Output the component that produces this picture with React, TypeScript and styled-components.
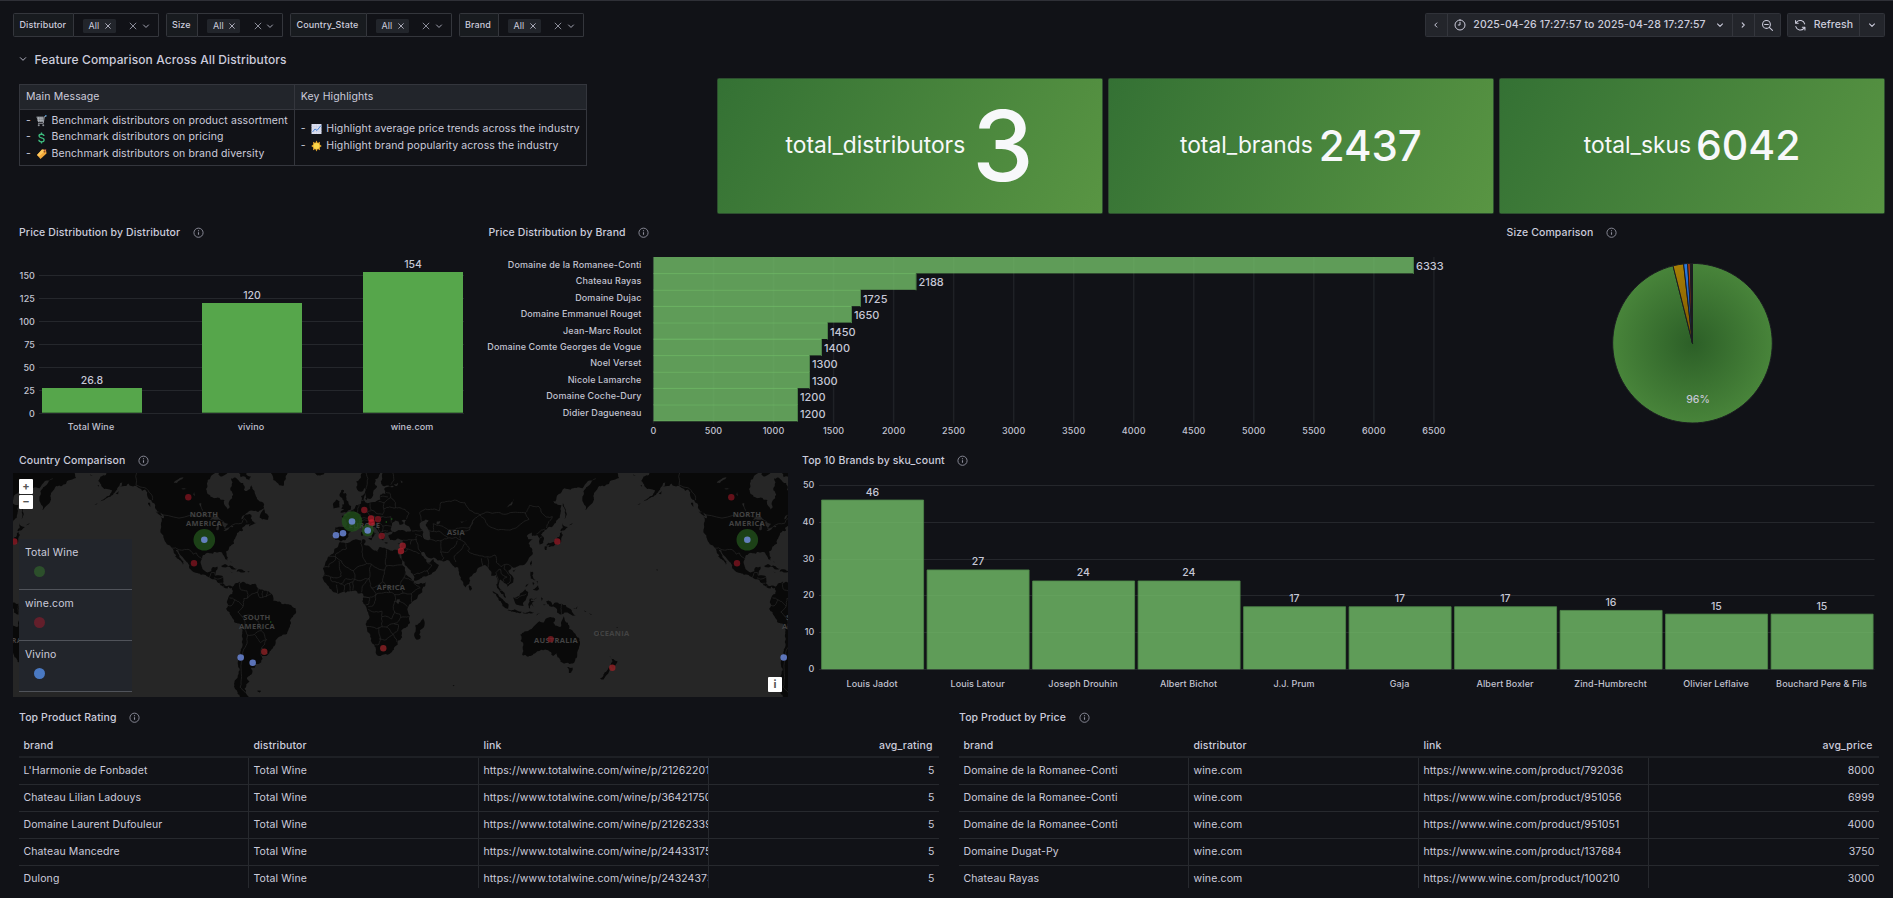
import React from 'react';
import styled, { createGlobalStyle } from 'styled-components';

const FONT = 'Inter, "Liberation Sans", sans-serif';

const Global = createGlobalStyle`
  * { box-sizing: border-box; }
  body {
    margin: 0;
    background: #111217;
    color: #ccccdc;
    font-family: ${FONT};
    font-size: 10.5px;
    letter-spacing: 0.01071em;
    overflow: hidden;
  }
  svg { display: block; flex: none; }
`;

/* ---------- page frame ---------- */

const Page = styled.div`
  height: 898px;
  border-top: 1px solid #2f3037;
  overflow: hidden;
`;

const Toolbar = styled.div`
  display: flex;
  align-items: center;
  height: 24px;
  margin: 12px 8px 0 13px;
`;

const Filters = styled.div`
  display: flex;
  flex: 1;
  gap: 7px;
`;

const FilterBox = styled.div`
  display: flex;
  height: 24px;
`;

const FilterLabel = styled.div<{ $w: number }>`
  display: flex;
  align-items: center;
  width: ${(p) => p.$w}px;
  padding: 0 0 1px 5.5px;
  font-size: 9px;
  font-weight: 500;
  background: #181b1f;
  border: 1px solid #34363c;
  border-radius: 1.5px 0 0 1.5px;
  white-space: nowrap;
`;

const FilterSelect = styled.div`
  display: flex;
  align-items: center;
  width: 85px;
  padding: 1px 7px 0 9px;
  border: 1px solid #34363c;
  border-left: none;
  border-radius: 0 1.5px 1.5px 0;
  color: #a4a5b3;
`;

const Chip = styled.span`
  display: flex;
  align-items: center;
  gap: 4.5px;
  height: 14px;
  width: 33px;
  padding-left: 6px;
  margin-right: auto;
  background: #22252b;
  border-radius: 1.5px;
  color: #ccccdc;
  font-size: 9px;
`;

const SelectIcons = styled.span`
  display: flex;
  align-items: center;
  gap: 2.5px;
`;

const ButtonGroup = styled.div`
  display: flex;
  height: 24px;
  margin-left: 6px;
  border: 1px solid #303239;
  border-radius: 1.5px;
  background: #23252b;
`;

const ToolButton = styled.button<{ $w: number }>`
  display: flex;
  align-items: center;
  justify-content: center;
  width: ${(p) => p.$w}px;
  padding: 0;
  border: 0;
  border-left: 1px solid #34363d;
  background: none;
  color: #ccccdc;
  font: 500 10.5px ${FONT};
  letter-spacing: 0.01071em;
  white-space: nowrap;
  &:first-child { border-left: 0; }
`;

const RangeText = styled.span`
  margin: 0 9px 1px 7px;
`;

const RefreshText = styled.span`
  margin: 0 0 1px 7.5px;
`;

const SectionTitle = styled.h1`
  display: flex;
  align-items: center;
  gap: 8px;
  height: 24px;
  margin: 10px 0 6.5px 18.5px;
  font-size: 12px;
  font-weight: 500;
`;

const Grid = styled.main`
  display: grid;
  grid-template-columns: repeat(24, minmax(0, 1fr));
  grid-auto-rows: 22.5px;
  gap: 6px;
  margin: 0 8px 0 13px;
`;

const Cell = styled.section<{ $cols: number; $rows: number }>`
  grid-column: span ${(p) => p.$cols};
  grid-row: span ${(p) => p.$rows};
  display: flex;
  flex-direction: column;
  min-width: 0;
`;

const PanelHeader = styled.h2<{ $inset: number }>`
  display: flex;
  align-items: center;
  gap: 12.5px;
  flex: none;
  height: 25px;
  margin: 0;
  padding-left: ${(p) => p.$inset}px;
  font-size: 10.5px;
  font-weight: 500;
`;

/* ---------- message table ---------- */

const MessageTable = styled.table`
  width: 567px;
  margin: 6.5px 0 0 6px;
  border-collapse: collapse;
  line-height: 16.5px;
  border: 1px solid #303239;
`;

const MessageHead = styled.th`
  height: 25px;
  padding: 0 6px 0;
  text-align: left;
  font-weight: 400;
  background: #22252b;
  border: 1px solid #34363d;
`;

const MessageCell = styled.td`
  height: 56px;
  padding: 0 6px;
  border: 1px solid #34363d;
`;

const MessageLine = styled.div`
  display: flex;
  align-items: center;
  white-space: nowrap;
  svg { margin: 0 4.5px 0 5px; }
`;

/* ---------- stat tiles ---------- */

const StatTile = styled.div`
  display: flex;
  flex: 1;
  align-items: center;
  justify-content: center;
  margin-left: -0.5px;
  color: #f7f8fa;
  border: 1px solid #2d4f2f;
  background: linear-gradient(120deg, #347134, #599543);
  border-radius: 1.5px;
  font-weight: 500;
  letter-spacing: 0;
  line-height: 1;
`;

const StatName = styled.span`
  font-size: 22.8px;
  font-weight: 400;
`;

const StatValue = styled.span<{ $size: number; $gap: number }>`
  margin-left: ${(p) => p.$gap}px;
  font-size: ${(p) => p.$size}px;
`;

/* ---------- charts ---------- */

const Chart = styled.svg`
  overflow: visible;
  margin-top: -1px;
`;

const AxisText = styled.text`
  font: 500 9px ${FONT};
  fill: #c2c3d1;
`;

const ValueText = styled.text<{ $size?: number }>`
  font: 500 ${(p) => p.$size ?? 10.5}px ${FONT};
  fill: #c6c7d6;
  letter-spacing: 0;
`;

/* ---------- map ---------- */

const MapFrame = styled.div`
  position: relative;
  width: 775px;
  height: 224px;
  overflow: hidden;
  background: #262626;
`;

const ZoomControls = styled.div`
  position: absolute;
  left: 6px;
  top: 6px;
  display: flex;
  flex-direction: column;
  gap: 1px;
`;

const MapButton = styled.button`
  display: flex;
  align-items: center;
  justify-content: center;
  width: 14px;
  height: 14.5px;
  padding: 0 0 1px;
  border: 0;
  border-radius: 1px;
  background: #ffffff;
  color: #555555;
  font: 700 11px ${FONT};
`;

const Attribution = styled(MapButton)`
  position: absolute;
  right: 6px;
  bottom: 5.5px;
`;

const Legend = styled.div`
  position: absolute;
  left: 6px;
  top: 66px;
  width: 113px;
  background: #22252b;
`;

const LegendItem = styled.div`
  height: 51px;
  padding: 7px 6px 0;
  border-bottom: 1px solid #50535a;
`;

const LegendDot = styled.div<{ $c: string }>`
  width: 11px;
  height: 11px;
  margin: 6.5px 0 0 9px;
  border-radius: 50%;
  background: ${(p) => p.$c};
`;

const MapLabel = styled.text`
  font: 700 7.5px "Open Sans", sans-serif;
  letter-spacing: 0.3px;
  fill: #434343;
  text-anchor: middle;
`;

/* ---------- data tables ---------- */

const DataTable = styled.div<{ $inset: number }>`
  width: 920px;
  height: 158px;
  margin: 0.5px 0 0 ${(p) => p.$inset}px;
  overflow: hidden;
`;

const Row = styled.div<{ $head?: boolean }>`
  display: grid;
  grid-template-columns: repeat(4, 230px);
  height: ${(p) => (p.$head ? 28 : 27)}px;
  border-bottom: ${(p) => (p.$head ? '2px solid #1e2025' : '1px solid #27292e')};
  font-weight: ${(p) => (p.$head ? 500 : 400)};
`;

const DataCell = styled.div<{ $right?: boolean; $head?: boolean }>`
  overflow: hidden;
  padding: 0 ${(p) => (p.$right && p.$head ? 6.5 : p.$right ? 4.5 : 0)}px 0 4.5px;
  line-height: ${(p) => (p.$head ? 31 : 25)}px;
  text-align: ${(p) => (p.$right ? 'right' : 'left')};
  border-right: ${(p) => (p.$head || p.$right ? '0' : '1px solid #27292e')};
  white-space: nowrap;
`;

/* ---------- icons ---------- */

type IconProps = { size?: number; d: string; w?: number };
const Icon = ({ size = 10, d, w = 2 }: IconProps) => (
  <svg width={size} height={size} viewBox="0 0 24 24" fill="none" stroke="currentColor" strokeWidth={w} strokeLinecap="round" strokeLinejoin="round">
    <path d={d} />
  </svg>
);
const CHEVRON_DOWN = 'M6 9.5l6 6 6-6';
const CROSS = 'M5 5l14 14M19 5L5 19';
const ZOOM_OUT = 'M10.5 3a7.5 7.5 0 1 0 0 15a7.5 7.5 0 1 0 0-15zM16 16l6 6M7 10.5h7';
const CLOCK = 'M12 2a10 10 0 1 0 0 20a10 10 0 1 0 0-20zM12 6.5V12H8.5';
const SYNC = 'M20.5 9.5A9 9 0 0 0 5 6L3 8M3 3v5h5M3.500 14.500A9 9 0 0 0 19 18l2-2M21 21v-5h-5';

const Info = () => (
  <svg width="11" height="11" viewBox="0 0 24 24" fill="none" stroke="#8e8f9c" strokeWidth="2">
    <circle cx="12" cy="12.500" r="10" />
    <path d="M12 11.500v5.500M12 7v2.200" strokeWidth="2.400" />
  </svg>
);

const CartGlyph = () => (
  <svg width="11" height="12" viewBox="0 0 22 24" fill="none">
    <path d="M1 4h14l-1 10H4z" fill="#6d7177" />
    <path d="M1 4h14M2 7.500h13M3 11h12M5 4v10M8.500 4v10M12 4v10" stroke="#b5bac0" strokeWidth="1.300" />
    <path d="M20.500 2l-4 1.500-2 13H4" stroke="#a9adb3" strokeWidth="1.800" />
    <path d="M18 1.500l3 .3" stroke="#4aa3e8" strokeWidth="2.500" />
    <circle cx="5.500" cy="20.500" r="2" fill="#8d9197" />
    <circle cx="14.500" cy="20.500" r="2" fill="#8d9197" />
  </svg>
);
const DollarGlyph = () => (
  <svg width="11" height="12" viewBox="0 0 22 24" fill="none" stroke="#3dbb7e" strokeWidth="2.600">
    <path d="M16 8c0-2.200-2-3.500-5-3.500S6 6 6 8s1.500 3 5 3.700 5.200 2 5.200 4.200-2.200 3.700-5.200 3.700-5.300-1.600-5.300-4" />
    <path d="M11 1v4M11 19v4" />
  </svg>
);
const TagGlyph = () => (
  <svg width="11" height="12" viewBox="0 0 22 24">
    <path d="M12 3l8 1 1 7-12 11-7-8z" fill="#f3a93a" />
    <path d="M12 3l8 1-14 13-4-3z" fill="#ffc75c" />
    <circle cx="17" cy="7" r="1.800" fill="#6e3a17" />
    <path d="M17 7l3-5" stroke="#d8484e" strokeWidth="1.500" />
  </svg>
);
const TrendGlyph = () => (
  <svg width="11" height="12" viewBox="0 0 22 24" fill="none">
    <path d="M1 2h20v20H1z" fill="#dcdff0" />
    <path d="M1 7h20M1 12h20M1 17h20M6 2v20M11 2v20M16 2v20" stroke="#c8cce2" strokeWidth="1" />
    <path d="M3 18l5-6 4 3 8-10" stroke="#4c86d8" strokeWidth="2" />
  </svg>
);
const SunGlyph = () => (
  <svg width="11" height="12" viewBox="0 0 22 24">
    <path d="M11 1l2.500 5L18 3.500 17.500 9l4 3-4 3 .5 5.500-4.500-2.500L11 23l-2.500-5L4 20.500 4.500 15l-4-3 4-3L4 3.500 8.500 6z" fill="#e9a92c" />
    <circle cx="11" cy="12" r="6" fill="#fbd54a" />
  </svg>
);

/* ---------- price by distributor ---------- */

const DistributorChart = () => {
  const zero = 169.5;
  const bars = [
    { name: 'Total Wine', v: '26.8', x: 29, top: 144 },
    { name: 'vivino', v: '120', x: 189, top: 59 },
    { name: 'wine.com', v: '154', x: 350, top: 28 },
  ];
  return (
    <Chart width="463" height="198">
      {[0, 25, 50, 75, 100, 125, 150].map((t) => {
        const y = Math.round(zero - t * 0.92) - 0.5;
        return (
          <g key={t}>
            <line x1="26" x2="451" y1={y} y2={y} stroke="#25272c" />
            <AxisText x="22" y={y + 3} textAnchor="end">{t}</AxisText>
          </g>
        );
      })}
      {bars.map((b) => (
        <g key={b.name}>
          <rect x={b.x} y={b.top} width="100" height={169 - b.top} fill="#56a64b" />
          <rect x={b.x} y="168" width="100" height="1" fill="#3f7a39" />
          <ValueText x={b.x + 50} y={b.top - 4.5} textAnchor="middle">{b.v}</ValueText>
          <AxisText x={b.x + 49} y="186" textAnchor="middle">{b.name}</AxisText>
        </g>
      ))}
    </Chart>
  );
};

/* ---------- price by brand ---------- */

const BRAND_PRICES: [string, number][] = [
  ['Domaine de la Romanee-Conti', 6333],
  ['Chateau Rayas', 2188],
  ['Domaine Dujac', 1725],
  ['Domaine Emmanuel Rouget', 1650],
  ['Jean-Marc Roulot', 1450],
  ['Domaine Comte Georges de Vogue', 1400],
  ['Noel Verset', 1300],
  ['Nicole Lamarche', 1300],
  ['Domaine Coche-Dury', 1200],
  ['Didier Dagueneau', 1200],
];

const BrandChart = () => {
  const x0 = 170.5;
  const ticks = Array.from({ length: 14 }, (_, i) => i * 500);
  return (
    <Chart width="1005" height="198">
      {ticks.map((t) => (
        <g key={t}>
          <line x1={x0 + t * 0.12006} x2={x0 + t * 0.12006} y1="13" y2="179.500" stroke="#1f2126" strokeWidth="1.500" />
          <AxisText x={x0 + t * 0.12006} y="189.800" textAnchor="middle">{t}</AxisText>
        </g>
      ))}
      {BRAND_PRICES.map(([name, v], i) => {
        const y = 13 + i * 16.4;
        const w = v * 0.12;
        return (
          <g key={name}>
            <rect x={x0} y={y} width={w} height="16.400" fill="#73bf69" fillOpacity="0.800" />
            {i > 0 && <line x1={x0} x2={x0 + w} y1={y + 0.2} y2={y + 0.2} stroke="#73bf69" strokeOpacity="0.800" />}
            <line x1={x0 + w} x2={x0 + w} y1={y} y2={y + 16.9} stroke="#4b7f47" strokeWidth="1" />
            <AxisText x="158.500" y={y + 11} textAnchor="end">{name}</AxisText>
            <ValueText $size={11} x={x0 + w + 2.5} y={y + 13} >{v}</ValueText>
          </g>
        );
      })}
      <line x1={x0} x2={x0 + 144} y1="177" y2="177" stroke="#73bf69" strokeOpacity="0.500" />
    </Chart>
  );
};

/* ---------- size pie ---------- */

const SizePie = () => {
  const cx = 192.5;
  const cy = 99.2;
  const r = 79.8;
  const pt = (deg: number) => {
    const a = (deg * Math.PI) / 180;
    return `${(cx + r * Math.sin(a)).toFixed(2)} ${(cy - r * Math.cos(a)).toFixed(2)}`;
  };
  const slice = (a: number, b: number) => `M${cx} ${cy}L${pt(a)}A${r} ${r} 0 ${b - a > 180 ? 1 : 0} 1 ${pt(b)}Z`;
  const slices: [number, number, string][] = [
    [0, 345.9, 'g'],
    [345.9, 353.6, 'y'],
    [353.6, 356.5, 'b'],
    [356.5, 358.4, 'o'],
    [358.4, 359.2, 'r'],
    [359.2, 360, 'p'],
  ];
  const tones: Record<string, [string, string]> = {
    g: ['#2c5f27', '#48843a'],
    y: ['#7a5600', '#a87e04'],
    b: ['#16458f', '#2a7be8'],
    o: ['#702a08', '#b8420e'],
    r: ['#451318', '#6e1f26'],
    p: ['#24182a', '#33263a'],
  };
  return (
    <Chart width="385" height="198">
      <defs>
        {Object.entries(tones).map(([k, [a, b]]) => (
          <radialGradient key={k} id={`tone-${k}`} gradientUnits="userSpaceOnUse" cx={cx} cy={cy} r={r}>
            <stop offset="0" stopColor={a} />
            <stop offset="1" stopColor={b} />
          </radialGradient>
        ))}
      </defs>
      {slices.map(([a, b, k]) => (
        <path key={k} d={slice(a, b)} fill={`url(#tone-${k})`} stroke="#1a1c20" strokeWidth="1" />
      ))}
      <ValueText x="198" y="159" textAnchor="middle">96%</ValueText>
    </Chart>
  );
};

/* ---------- brand sku counts ---------- */

const SKU_COUNTS: [string, number][] = [
  ['Louis Jadot', 46],
  ['Louis Latour', 27],
  ['Joseph Drouhin', 24],
  ['Albert Bichot', 24],
  ['J.J. Prum', 17],
  ['Gaja', 17],
  ['Albert Boxler', 17],
  ['Zind-Humbrecht', 16],
  ['Olivier Leflaive', 15],
  ['Bouchard Pere & Fils', 15],
];

const SkuChart = () => (
  <Chart width="1089" height="226">
    {[0, 10, 20, 30, 40, 50].map((t) => {
      const y = Math.round(197 - t * 3.68) + 0.5;
      return (
        <g key={t}>
          <line x1="23" x2="1078.500" y1={y} y2={y} stroke="#25272c" />
          <AxisText x="18.500" y={y + 2.8} textAnchor="end">{t}</AxisText>
        </g>
      );
    })}
    {SKU_COUNTS.map(([name, v], i) => {
      const x = 25.6 + i * 105.5;
      const top = 197.3 - v * 3.68;
      return (
        <g key={name}>
          <rect x={x} y={top} width="102" height={197.3 - top} fill="#73bf69" fillOpacity="0.800" />
          <path d={`M${x} 197V${top}H${x + 102}V197`} fill="none" stroke="#4e8549" strokeWidth="0.800" />
          <ValueText x={x + 50.8} y={top - 4.5} textAnchor="middle">{v}</ValueText>
          <AxisText x={x + 50.5} y="215" textAnchor="middle">{name}</AxisText>
        </g>
      );
    })}
  </Chart>
);

/* ---------- world map ---------- */

const WORLD = 543;
const RADIUS = WORLD / (2 * Math.PI);
const project = (lon: number, lat: number): [number, number] => [
  335.7 + (lon * WORLD) / 360,
  126.9 - RADIUS * Math.asinh(Math.tan((lat * Math.PI) / 180)),
];

// Flat "lon lat lon lat ..." outlines.
const LAND = [
  // North and Central America
  '-166 70 -166 66.5 -168 65.6 -164.5 64.5 -161 64.5 -161 63.5 -164.5 63 -166 61.6 -164 60 -162 59 -158.5 58.8 -157 58.7 -158 57.5 -161 56 -164.5 54.6 -162 55 -158 56.3 -155 57.8 -153.5 59.3 -151.5 61 -150 61.2 -151.8 59.5 -149 60 -146 60.8 -144 60 -140 59.7 -137 58.3 -135 58.8 -133.5 56.5 -131 55 -130 54 -128 51.5 -125 50 -123 49.2 -122.5 47.5 -124.7 48.4 -124 46 -124.4 43 -124.2 40.3 -122.5 37.7 -120.6 34.6 -118.4 33.9 -117.1 32.5 -116 30.5 -114.3 28.5 -115 27.7 -112.2 25.5 -110 22.9 -109.5 23.3 -111 26 -112.8 29 -114.7 31.6 -113 31.2 -112 29 -109.4 26.5 -108 25 -105.7 22.5 -105.5 20.2 -104 19 -101.5 17.7 -98 16.2 -94.8 16.2 -92.3 14.6 -88 13.2 -85.8 11 -83.6 9 -82.8 8.1 -80.3 7.5 -79.6 8.8 -78 7.5 -77 8.5 -79.5 9.5 -81.5 9 -83.5 11 -83.2 14.5 -84 15.8 -88.5 15.8 -88.2 18 -87 21.4 -90.3 21.1 -91 18.7 -94.5 18.2 -96.2 19.5 -97.7 22.5 -97.3 26 -97 28 -94.5 29.5 -90 29.2 -89.3 30.3 -86 30.3 -84 30 -82.7 28 -81.8 26 -80.4 25.2 -80.1 27 -81.4 30.5 -79 33.3 -76 35 -76 37 -75 38.5 -74 40.5 -70 41.7 -70.8 43 -67 44.7 -64.8 45.6 -66 43.7 -63.5 44.6 -61 45.5 -64 46.2 -65 47.5 -64.5 49 -67 49.2 -71 47 -67 50 -60 50.2 -56 51.8 -56 53.3 -60 55 -61.8 57 -64.5 60.3 -67.5 58.3 -69.5 58.8 -70 61 -74 62.3 -78 62.4 -77.5 60 -78.5 58.6 -76.6 57 -79 54.8 -79 52 -80.2 51.3 -82.2 53 -82.3 55 -87 56 -92.5 57 -94.6 59 -94 61 -90.5 63.5 -87 64.5 -86 66 -82 70',
  '-86.5 63.7 -84 63 -80.5 64 -83 65 -86 65.5',
  '-78 65 -76 64.2 -73 64.3 -71.500 62.8 -66 61.9 -64.7 63 -68 63.8 -64 65 -62 67 -75 68',
  '-59 47.7 -57.5 50.5 -56 51.5 -55.5 49.8 -53 48.5 -53.5 46.8 -55.5 47',
  '-128 50.8 -125 50 -123.5 48.4 -126 49.3',
  '-133 54 -131.7 54 -131.5 52.3',
  '-154.5 57.5 -152.5 58.3 -152.8 57.2',
  '-166.5 60.3 -165.5 60.3 -166 59.8',
  '-168.5 53.2 -166.5 54 -167 53.4',
  '-171.5 63.6 -169 63.2 -171 63.3',
  // South America
  '-77.4 8.6 -75.5 10.6 -72 12.2 -71.6 10.8 -70 12 -68 10.6 -64 10.4 -62 10.6 -61 8.7 -58 6.8 -54 5.9 -51.5 4.3 -50 1.5 -50 -.5 -48 -.8 -44.5 -2.7 -40 -2.9 -37 -4.9 -35.2 -5.5 -34.8 -8 -37 -11.3 -39 -13.5 -39 -17.5 -41 -22 -44.5 -23.2 -48.5 -26 -48.7 -28.5 -51 -31 -53.5 -34 -56 -34.9 -58.3 -34 -57 -36.3 -58 -38.2 -62 -39 -62.3 -41 -65 -41 -63.8 -42.5 -65.3 -44.5 -67.5 -46.2 -65.8 -47.5 -69 -50.5 -68.3 -52.4 -65.3 -54.7 -68 -56 -72 -54 -75 -51 -75.5 -47 -73 -44 -73.5 -39 -73.2 -37 -71.5 -32 -70.2 -25 -70.3 -18.3 -76 -14.5 -79 -8 -81.3 -6 -80 -3 -80.8 -1.5 -80 .8 -77.2 4 -77.5 7',
  '-61 -51.5 -58 -51.5 -59 -52.2',
  // Caribbean
  '-84.5 21.9 -82 23.1 -77 21.8 -74.2 20.2 -77.5 19.9 -79 21.5',
  '-74.3 18.5 -73 19.9 -68.5 18.7 -71.5 17.8',
  '-78.3 18.4 -76.3 18.2 -77.5 17.8',
  '-67.2 18.4 -65.6 18.4 -66.5 18',
  '-78.3 25 -77.8 24.2 -78 24',
  // Greenland and Iceland
  '-52 70 -53 66 -51.500 64 -50 62 -46 60.3 -43.3 60 -42 62 -40 65 -33 68 -30 70',
  '-22.5 64 -20 63.4 -16 64.1 -14 65 -22 66',
  // Africa
  '-5.9 35.8 -2 35.1 3 36.8 10 37.3 11 36.8 10.2 34.2 15 32.4 19 30.3 20 32.7 23 32.7 29 30.9 32.3 31.2 32.5 29.8 35.5 24 37.3 21 37.3 18.8 39.5 15.3 43.2 12.5 43 11.5 45 10.5 51.2 11.9 50.8 9.3 48 4.5 43 -.5 39.5 -4.5 39.3 -8 40.7 -10.5 40.7 -15 36.5 -18.5 34.8 -20 35.5 -24 32.7 -26 32.5 -28.5 30 -31.3 27 -33.7 22 -34.2 20 -34.8 18.4 -34 18 -32 15.2 -27 14.4 -22.5 12 -18 13.7 -12 13 -8.5 12 -6 9 -1 9.7 3.5 8.5 4.6 6 4.3 4.3 6.3 1 5.9 -2 4.8 -4 5.2 -7.6 4.4 -11.5 6.9 -13.2 8.9 -15 11 -16.8 13 -17.4 14.7 -16.2 18 -17 21 -15 25 -13 27.8 -9.8 30 -9.5 32 -6.8 34',
  '49.3 -12 50.4 -15.5 47.5 -24.8 45 -25.5 43.4 -22 44.4 -19.5 44.4 -16.2 47 -15.2',
  // Eurasia
  '-9 37 -9.4 38.8 -8.7 41 -9 43.2 -4 43.5 -1.8 43.4 -1.2 45 -2.2 47.1 -4.5 48 -4.5 48.6 -1.6 48.6 -1.5 49.6 .2 49.6 1.6 50.8 4 51.7 5 53.1 8.2 53.7 8.6 55 8.1 56.5 10.5 57.7 10.3 56.3 9.8 55 11 54.2 14 54 18.5 54.7 21 55.3 21 57 22.5 57.5 24.3 57.2 23.5 59 28 59.6 30 60 25 60.2 22.5 60 21.3 61.5 22 63.3 25 65 22 65.8 17.5 62.3 17.2 60.8 18.8 60 16.5 58.5 16 56.5 14.2 55.4 12.8 55.6 11.3 58.8 10.5 59.4 8 58.1 5.6 58.8 5 61.5 8 63.5 12 66 15 69 180 70 190 66.1 187 64.4 180 65 178 64.5 179.3 62.6 174 61.8 170 60 166 60 163.3 58 162.5 56 160 53 156.8 51 155.6 54 155.8 57 160 60.5 164 62.5 160 61.8 155 59.3 151 59.4 143 59.3 137 54.5 135.3 54.8 141 53 140.5 50 140 48 136 44.5 132 43.2 130 42 127.5 39.6 129.3 37 129 35.2 126.5 34.5 126.7 37.5 125 39.5 121.5 39 121.5 40.8 118 39 119 37.3 122.5 37.2 119.3 35 121.8 31.5 121.5 28.5 118.5 24.8 114 22.4 110.5 21 108 21.6 105.8 19 107 17 109.2 13 109 11.5 106.7 10.2 105 8.7 104.8 10.2 102.5 12 100.8 13.4 99.9 12 99.3 9.3 100.5 7.2 103.3 4.5 104.2 1.4 103.4 1.5 100.5 5 98.3 8 98.7 12 97.6 16.5 95.4 15.8 94.3 16 94 19 92 21.5 90.5 22.5 87 21.3 85 19.6 82.3 16.6 80.2 15 79.9 10.4 77.6 8.1 76 10.5 73.5 16 72.8 20 72.5 21 70.5 20.9 69 22.3 67.5 23.9 66.5 25.3 61.5 25.1 57.2 26.8 54 26.6 51.3 27.9 50 30.2 48 30 48.5 28.3 50.2 26.6 51.5 25.9 51.6 24.3 54 24.1 56.3 26.2 56.6 24.5 59.8 22.5 57.7 19 55 17 52 15.6 45 12.8 43.3 12.7 42.7 16.5 39 21 37 24.5 34.9 29.4 32.6 29.9 32.3 31.2 34.3 31.3 35.8 35 36 36.8 30.6 36.7 27.5 36.9 26.3 39.3 29 40.5 29.2 41.2 31.5 41.2 35 42 38 41 41.5 41.5 39 44 37 45.2 38.5 47 35 46.2 36.5 45.3 33.7 44.5 33 46 30.8 46.5 28.7 44.5 27.7 42.5 28.9 41.2 26 40.6 23 40.4 24 38 22.8 36.6 21.2 38 19.4 41.5 18.5 42.5 15 44.5 13.7 45.5 12.3 45.2 12.5 44 14.2 42.3 16 41.8 18.4 40 17 40.4 16.8 39 15.8 38 15.6 40 13.5 41.2 10.5 43 8.8 44.4 6 43.1 3.5 43.4 3 41.8 .2 40.6 -.1 38.7 -2 36.8 -5.4 36.1 -6.4 36.9',
  '-5.5 50 1.3 51.2 1.6 52.7 0 53.5 -1.5 55 -2 57.6 -4 57.6 -3.1 58.6 -5 58.6 -6 56.5 -3.3 54.8 -3 53.4 -4.5 53.2 -4.2 52.3 -5 51.7 -3 51.4',
  '-6 52.2 -6 54.5 -8 55.3 -10 54 -10 51.7',
  '12.500 38 15.5 38.2 15 36.7',
  '8.3 41 9.6 41 9.5 39.2 8.5 39',
  '8.7 42.5 9.5 42.8 9.3 41.5',
  '23.6 35.5 26.3 35.2 24.8 34.9',
  '32.4 35 34.3 35.5 33.2 34.6',
  '11 55.7 12.5 56 12 55',
  // Asia islands
  '130.9 34 132.5 35.4 136 35.8 137 37.3 139.5 38.5 140 40.5 141.3 41.4 142 39.5 140.9 37.5 140.8 35.7 139 34.8 137 34.6 135.8 33.5 133 34.3',
  '140.3 41.5 141.5 45.3 145.3 43.5 143.3 42',
  '130 33.5 131.8 33.5 131.2 31.4 130.2 31.3',
  '132.3 33.3 134.5 34.2 134 33.3',
  '142 46 142 53.8 143.3 52 144.5 49 143 46.7',
  '146 44.3 148.5 45.5 147 44.4',
  '121.5 25.2 121 22 120.1 23.3',
  '108.7 19.2 110.8 20 109.5 18.2',
  '80 9.7 81.8 7.5 80.5 6 79.8 7.5',
  '120.5 18.3 122.2 18.3 121.7 16 124 13 120.7 14',
  '122 7 125.5 9.7 126.3 7 125 6',
  '122 11.7 123.200 11 122.5 9.5 122 10.5',
  '124.5 12.4 125.4 12.3 125 10.300',
  '117.2 8.4 119.5 11.2 118 9',
  '95.3 5.6 98 4.3 103.5 -1 106 -3 105.7 -5.8 102 -4 98.7 1.5',
  '105.3 -6.7 108.5 -6.7 114.5 -7.7 114.3 -8.7 108 -7.8',
  '115.2 -8.2 119 -8.2 122.800 -8.2 122 -8.8 117 -9',
  '123.7 -10.3 127 -8.4 125 -9.4',
  '109 1.5 111 1.7 114 4.5 117 7 119 5.2 117.7 1 116 -4 111 -3 110 -1',
  '119.5 -5.5 119 -3 120 .8 125 1.5 121 .4 120.7 -.8 123.3 -1 121.5 -2 122.7 -4.5 121 -2.8 120.3 -5.5',
  '127.500 1.8 128.7 1 128 -.7',
  '128 -3 130.8 -3.2 129.5 -3.5',
  '131 -.8 134 -1 135 -3.3 138 -1.7 141 -2.6 146 -5.5 148 -8 150.5 -10.5 147 -9.5 143 -8.3 142.5 -9.2 138 -8.3 138 -6 133 -4',
  '148.5 -5.6 152 -4.3 151 -6',
  '156 -7 157.500 -8 156.500 -7.600',
  '159.5 -8.5 161.5 -10 160 -9.500',
  '164 -20.2 167 -22.3 165.5 -21.6',
  '177.3 -17.6 178.6 -17.7 178 -18.2',
  '-155.9 20 -155 19.5 -155.7 19',
  // Oceania
  '113.7 -22.5 114 -26 115.8 -32 115 -34.2 118 -35 124 -33 129 -31.6 131.5 -31.5 135.5 -34.8 137.8 -33 138.5 -35.5 140.5 -38 144 -38.5 146.4 -39 150 -37.4 151.5 -33 153.3 -28.5 153 -25 150.7 -23 148.5 -20 146 -18.8 145.3 -15 143.6 -14 142.5 -10.8 141.6 -13 140.8 -17.4 139 -17.3 135.5 -15 136.8 -12.2 132.6 -11.5 130.5 -12.5 129.3 -14.9 126.5 -14 123 -17 122 -18.2 118.5 -20.3 115 -21.5',
  '144.7 -40.8 148.3 -40.9 147.5 -43.3 146 -43.5',
  '172.8 -34.5 175.5 -36.5 178.3 -37.7 176.9 -39.6 175.2 -41.6 173.8 -39.3 174.8 -38',
  '172.7 -40.6 174.2 -41.5 171 -44.5 169 -46.6 166.6 -46 170.5 -43',
  '69 -49 70.3 -49.3 69.300 -49.6',
];

const LAKES = [
  '47 45 51 47 53 46.5 51 44.5 53 42 53.8 40 53.8 37 50 37.4 49 39.5 49.5 41 47.5 43',
  '-92 46.7 -88 48.8 -84.7 46.6 -88 46.8',
  '-87.8 42 -87 45.5 -85 45.8 -86.300 42',
  '-84 45.8 -80 45 -82 43.2 -83.500 44',
  '-83 41.7 -79 42.8 -81 41.7',
  '-79.6 43.3 -76.3 44 -77 43.3',
  '-99 53.8 -97.7 53.8 -96.5 50.6 -97.6 51.6',
  '-116 61 -112 62.6 -109.500 62.8 -114 61',
  '-111 59.300 -107 59.300 -110 58.9',
  '-102.500 58 -101.800 56.600 -103 57',
  '104 51.5 108 53 109.7 55.7 107.500 53.7',
  '58.500 46 60.8 46.3 60 45 58.500 44.5',
  '74 46 79 46.8 75 45.300',
  '31.8 .3 34 .2 33 -2.7 31.8 -2',
  '30 60.500 32.8 61 32 60',
  '34.500 62 36 61.3 35 61',
];

const BORDERS = [
  '-123 49 -95 49 -88 48 -83 46 -82 42.5 -79 43.3 -75 45 -71 45.2 -69 47.3 -67.5 45.5',
  '-141 60.3 -141 70',
  '-141 60.3 -135.500 59.500 -130 56 -130 55',
  '-117 32.5 -114.7 32.6 -111 31.3 -106.5 31.8 -103 29 -101 29.7 -97.3 25.9',
  '-92.3 14.6 -91 17.800 -89 17.800 -88.5 16', '-89.300 14.400 -86 13.800 -83.2 15', '-85.700 11 -83.7 11', '-82.9 8.1 -82.7 9.6',
  '-79 1.4 -75.3 0 -70 -4.2 -69.500 1 -67 1.2 -67.500 6 -72 7.3 -72.500 11 -71.3 11.9',
  '-80.3 -3.4 -78 -4 -75.3 0', '-70 -4.2 -73.500 -8 -70.500 -11 -65.300 -10 -60 -14 -58 -20 -62.500 -22.3 -67 -22.8 -69 -19 -69.500 -12.500 -70.500 -11',
  '-70.3 -18.3 -69 -17.600', '-67 -22.8 -70 -32 -71.500 -40 -72 -50 -68.5 -52.3', '-58 -20 -54.500 -25.5 -58.500 -27.2 -62.500 -22.3', '-54.500 -25.5 -57.6 -30.2 -53.5 -33.7', '-57.6 -30.2 -58.3 -34',
  '-67 1.2 -64 4 -60.500 5 -59 1.500 -54.500 2.3 -51.500 4', '-57 6 -57 2', '-54 5.8 -54.500 2.3', '-60.500 5 -60 8',
  '-13 27.7 -8.700 27.5 -8.700 26 -13 23 -13 21.300 -17 21', '-8.700 27.5 -4.8 25 3 19 12 23.5 9.800 26.500 9 32 8 35 8.500 37', '-2 35 -1.5 32 -8.700 29 -8.700 27.5',
  '12 23.5 15 23 24 19.5 25 22 25 31.6', '25 22 37 22', '15 23 13.500 14 4 13.500 3 19', '-12 15 -5 15.500 -6.500 25', '-12 15 -16.500 16.200', '4 13.500 -2 14 -5.500 10.500 -11.500 12.400 -12 15',
  '-8 10 -7.500 4.500', '-5.500 10.500 -2.800 9.500 -3 5', '-2.800 9.500 .500 11 1 6', '2.700 12 2.700 6.400', '.500 11 2.700 12 4 13.500', '13.500 14 8.500 5', '24 19.5 22.500 12 27.500 5 18.500 4 15 8 13.500 14', '22.500 12 15 8',
  '27.500 5 30.500 3.500 29.500 -4.500 30.500 -8 28.500 -12.500 22 -11 22 -7.500 17 -8 13 -6', '9.5 2.200 16 2 18.500 4', '18 4 16 -4 13 -4.500', '9.500 2 14 1 13 -3 11 -3.500', '24 9 34 9.500 36.500 14.500 37.500 18', '34 9.500 36 4.5 41.500 4 41.500 -1.500', '36 4.500 30.500 3.500', '41.500 4 47.500 8 43 11',
  '36.500 14.500 42.500 12.500', '34 -1 37.500 -3 39 -4.6', '34 -1 30 -1', '30.500 -8 34 -9.500 34.500 -11.500 40.500 -10.700', '34.500 -11.500 33 -14 30 -15.6 25 -17.7 12 -17.3', '22 -11 22 -17.6', '20 -18 20 -28.3 17 -28.8', '20 -25 25 -25.500 29.500 -22.2 31.500 -25 32 -27', '25 -17.700 29.500 -22.2 32.500 -20 32.800 -16 30 -15.6',
  '-7 42 -7 37.2', '-8.800 42 -6.500 42', '-1.700 43.2 3 42.4', '2.5 51 6.200 49.500 8 49 7.500 47.5 7 44', '6.200 49.500 6 51.800 7 53.3', '8.500 54.900 9.800 54.900', '14.2 53.8 15 51 12.2 50.2 13.700 48.7 13 47.6 7.500 47.5', '15 51 18.8 49.5 22.500 49.1 23.500 51 23.500 54 19.8 54.4', '13.7 48.7 17 48.500 16 46.800 13.7 46.5 10.500 46.8 7 45.9', '17 48 22.2 48.2 20.500 46.2 16.500 46.5', '22.2 48.2 28 48.2 28.200 45.500', '20.500 46.2 22.500 44 28.500 43.800', '22.500 44 22.500 41.3 26 41.500', '19 45 20 42 21 40.800 22.9 41.3',
  '23.500 54 28 56 27.500 57.5', '23.500 51.6 31 52 34 52 40 49.8 38.3 47.2', '28 56 31 54 31 52', '21 56.200 26 56.2', '24.500 58 27.3 57.6', '28 60.5 30 62 30 66', '12 66 12.3 61 11.500 59',
  '48 46 47 50 51 51.500 60 50.700 61 54 70 55 77 54 80 51 87 49 83 47 80 43 74 43 70 42 66 42 61 44 56 45 56 41.3 53 42',
  '87 49 98 50 107 50 117 49.800 120 53 126 52.5 131 48 135 48.300 131 43', '87 49 91 45.5 97 42.6 106 42 112 43.6 116 46 119.5 47 117 49.800', '83 47 80 42 74 40 74 37 80 32 79 31 88 28 92 27.5 97 28.5 98 24 101 21.500 105 23 108 21.5',
  '56 41.3 60 41.500 66 38 61 36.5 54 37.3', '66 38 71 38.300 74 37', '61 36.5 61 30 66 30 70 33 72 36.500', '61 30 63 27 61.6 25.2', '71 24.300 70 28 75 32 77 35', '44 40 48.5 38.500', '45 39 45 36 46 33 48 30', '42 37 36.200 36.800', '41 34.5 42 37 45 37.2', '39 32 36 32.500 36 33', '39 32 47 29.3', '35 29.5 38 30.500 39 32', '52 24 55 22.500 52 19 45 17.3 43 16.500', '52 19 53 16.700', '42 41.500 47 41.500 48.5 41.8', '88 26.500 89 22', '92 27 92.500 21', '97.500 18 98.500 15 99 12', '100.500 20 101 17.500 105 15 102.500 13.500 103 12', '100.500 20 98 18', '104 22.800 103 20 107.500 15 107 12 105 10.500', '100.200 6.500 102 6.300', '109.800 1.500 112 1 115 3 117.700 4', '141 -2.6 141 -9.2', '127 41.5 130 42.4', '124.500 40 127 41.5', '126.700 37.800 128.400 38.600',
];

const hash = (n: number) => {
  const s = Math.sin(n * 127.1 + 11.7) * 43758.5453;
  return s - Math.floor(s) - 0.5;
};

// Splits every long edge and nudges the new points so coasts look irregular.
const roughen = (pts: [number, number][], closed: boolean, amount: number) => {
  let cur = pts;
  for (let pass = 0; pass < 3; pass += 1) {
    const next: [number, number][] = [];
    const n = closed ? cur.length : cur.length - 1;
    for (let i = 0; i < n; i += 1) {
      const [ax, ay] = cur[i];
      const [bx, by] = cur[(i + 1) % cur.length];
      next.push([ax, ay]);
      const len = Math.hypot(bx - ax, by - ay);
      if (len > 2.2 && len < 70) {
        const k = hash(ax * 3.1 + by * 1.7 + pass) * amount;
        next.push([(ax + bx) / 2 - (by - ay) * k, (ay + by) / 2 + (bx - ax) * k]);
      }
    }
    if (!closed) next.push(cur[cur.length - 1]);
    cur = next;
  }
  return cur;
};

const toPath = (outline: string, closed: boolean, amount: number) => {
  const nums = outline.split(' ').map(Number);
  const pts: [number, number][] = [];
  for (let i = 0; i < nums.length; i += 2) pts.push(project(nums[i], nums[i + 1]));
  const d = roughen(pts, closed, amount).map(([x, y]) => `${x.toFixed(1)} ${y.toFixed(1)}`).join('L');
  return `M${d}${closed ? 'Z' : ''}`;
};

const LAND_PATH = LAND.map((o) => toPath(o, true, 0.4)).join('');
const LAKE_PATH = LAKES.map((o) => toPath(o, true, 0.3)).join('');
const BORDER_PATH = BORDERS.map((o) => toPath(o, false, 0.25)).join('');

const MAP_LABELS: [string, number, number][] = [
  ['NORTH', 191, 44.2], ['AMERICA', 191, 53], ['SOUTH', 244, 147], ['AMERICA', 244, 155.7],
  ['EUROPE', 351.5, 54.5], ['AFRICA', 378, 116.5], ['ASIA', 443, 61.7], ['AUSTRALIA', 543, 169.7], ['OCEANIA', 598.5, 163.3],
];

// x, y, radius, colour, opacity
const MARKERS: [number, number, number, string, number][] = [
  [191.3, 66.8, 10.8, '#22501c', 0.8], [339, 48.500, 10.3, '#22501c', 0.8], [354.7, 57.5, 6, '#22501c', 0.8],
  [373.3, 49, 0.8, '#1f6b1a', 0.9], [378.7, 46, 0.8, '#1f6b1a', 0.9], [257.7, 149, 0.8, '#1f6b1a', 0.9],
  [175.3, 24.3, 3.2, '#7d141f', 0.8], [181, 90.3, 3.2, '#7d141f', 0.8], [351.3, 37, 3.2, '#8f1a26', 0.75],
  [358, 45.500, 3.2, '#b01c2a', 0.75], [358.600, 49.500, 3.2, '#c41c2c', 0.75], [365, 46.3, 3.2, '#7d141f', 0.8],
  [368.7, 63, 3.2, '#8f1a26', 0.75], [370.3, 175.3, 3.2, '#8f2226', 0.8], [251.3, 178.7, 3.2, '#8f2226', 0.8],
  [389.7, 72.7, 3.2, '#9c1f2b', 0.8], [388, 78, 3.2, '#a81f2b', 0.8], [544.3, 68.5, 3.2, '#8f1a26', 0.8],
  [537.7, 166.3, 3.2, '#7d1c22', 0.8], [599.3, 194.7, 3.2, '#8f2226', 0.85],
  [191.3, 66.8, 3.3, '#6b87cf', 0.9], [339, 48.5, 3.3, '#6b87cf', 0.9], [354.7, 57.5, 3.3, '#6b87cf', 0.9],
  [323, 62.3, 3.3, '#6580cc', 0.9], [330, 60.3, 3.3, '#6580cc', 0.9], [227.7, 184.5, 3.3, '#6580cc', 0.9], [239.7, 189.7, 3.3, '#6580cc', 0.9],
];

const WorldMap = () => (
  <svg width="775" height="224">
    {[-WORLD, 0, WORLD].map((dx) => (
      <g key={dx} transform={`translate(${dx} 0)`}>
        <path d={LAND_PATH} fill="#090909" />
        <path d={LAKE_PATH} fill="#262626" />
        <path d={BORDER_PATH} fill="none" stroke="#262626" strokeWidth="0.700" />
      </g>
    ))}
    {[-WORLD, 0, WORLD].map((dx) => (
      <g key={dx} transform={`translate(${dx} 0)`}>
        {MAP_LABELS.filter(([, x]) => x + dx > -10 && x + dx < 790).map(([t, x, y]) => (
          <MapLabel key={`${t}${y}`} x={x} y={y}>{t}</MapLabel>
        ))}
        {MARKERS.map(([x, y, r, c, o], i) => (
          <circle key={i} cx={x} cy={y} r={r} fill={c} fillOpacity={o} />
        ))}
      </g>
    ))}
  </svg>
);

/* ---------- composition ---------- */

const FILTERS: [string, number][] = [['Distributor', 60.5], ['Size', 32.5], ['Country_State', 76.5], ['Brand', 40]];

const Filter = ({ name, width }: { name: string; width: number }) => (
  <FilterBox>
    <FilterLabel $w={width}>{name}</FilterLabel>
    <FilterSelect>
      <Chip>All<Icon size={8} d={CROSS} w={2.4} /></Chip>
      <SelectIcons>
        <Icon size={10} d={CROSS} />
        <Icon size={10} d={CHEVRON_DOWN} w={2.4} />
      </SelectIcons>
    </FilterSelect>
  </FilterBox>
);

const Stat = ({ name, value, size, gap }: { name: string; value: string; size: number; gap: number }) => (
  <Cell $cols={5} $rows={5}>
    <StatTile>
      <StatName>{name}</StatName>
      <StatValue $size={size} $gap={gap}>{value}</StatValue>
    </StatTile>
  </Cell>
);

const Header = ({ children, inset = 6 }: { children: React.ReactNode; inset?: number }) => (
  <PanelHeader $inset={inset}>{children}<Info /></PanelHeader>
);

const Table = ({ columns, rows, inset = 6 }: { columns: string[]; rows: string[][]; inset?: number }) => (
  <DataTable $inset={inset}>
    <Row $head>
      {columns.map((c, i) => <DataCell key={c} $head $right={i === 3}>{c}</DataCell>)}
    </Row>
    {rows.map((r, n) => (
      <Row key={n}>
        {r.map((c, i) => <DataCell key={i} $right={i === 3}>{c}</DataCell>)}
      </Row>
    ))}
  </DataTable>
);

const RATED = [
  ["L'Harmonie de Fonbadet", 'Total Wine', 'https://www.totalwine.com/wine/p/21262201', '5'],
  ['Chateau Lilian Ladouys', 'Total Wine', 'https://www.totalwine.com/wine/p/36421750', '5'],
  ['Domaine Laurent Dufouleur', 'Total Wine', 'https://www.totalwine.com/wine/p/21262339', '5'],
  ['Chateau Mancedre', 'Total Wine', 'https://www.totalwine.com/wine/p/24433175', '5'],
  ['Dulong', 'Total Wine', 'https://www.totalwine.com/wine/p/24324373', '5'],
];

const PRICED = [
  ['Domaine de la Romanee-Conti', 'wine.com', 'https://www.wine.com/product/792036', '8000'],
  ['Domaine de la Romanee-Conti', 'wine.com', 'https://www.wine.com/product/951056', '6999'],
  ['Domaine de la Romanee-Conti', 'wine.com', 'https://www.wine.com/product/951051', '4000'],
  ['Domaine Dugat-Py', 'wine.com', 'https://www.wine.com/product/137684', '3750'],
  ['Chateau Rayas', 'wine.com', 'https://www.wine.com/product/100210', '3000'],
];

export default function App() {
  return (
    <Page>
      <Global />
      <Toolbar>
        <Filters>
          {FILTERS.map(([name, w]) => <Filter key={name} name={name} width={w} />)}
        </Filters>
        <ButtonGroup>
          <ToolButton $w={21}><Icon size={10} d="M14 7l-5 5 5 5" w={2.4} /></ToolButton>
          <ToolButton $w={285}>
            <Icon size={12} d={CLOCK} />
            <RangeText>2025-04-26 17:27:57 to 2025-04-28 17:27:57</RangeText>
            <Icon size={10} d={CHEVRON_DOWN} w={2.6} />
          </ToolButton>
          <ToolButton $w={22.5}><Icon size={10} d="M10 7l5 5-5 5" w={2.6} /></ToolButton>
          <ToolButton $w={26}><Icon size={12.5} d={ZOOM_OUT} /></ToolButton>
        </ButtonGroup>
        <ButtonGroup>
          <ToolButton $w={71}><Icon size={12.5} d={SYNC} /><RefreshText>Refresh</RefreshText></ToolButton>
          <ToolButton $w={25}><Icon size={10} d={CHEVRON_DOWN} w={2.6} /></ToolButton>
        </ButtonGroup>
      </Toolbar>

      <SectionTitle><Icon size={8} d="M4 8l8 8 8-8" w={2.6} />Feature Comparison Across All Distributors</SectionTitle>

      <Grid>
        <Cell $cols={9} $rows={5}>
          <MessageTable>
            <thead>
              <tr><MessageHead>Main Message</MessageHead><MessageHead>Key Highlights</MessageHead></tr>
            </thead>
            <tbody>
              <tr>
                <MessageCell>
                  <MessageLine>-<CartGlyph />Benchmark distributors on product assortment</MessageLine>
                  <MessageLine>-<DollarGlyph />Benchmark distributors on pricing</MessageLine>
                  <MessageLine>-<TagGlyph />Benchmark distributors on brand diversity</MessageLine>
                </MessageCell>
                <MessageCell>
                  <MessageLine>-<TrendGlyph />Highlight average price trends across the industry</MessageLine>
                  <MessageLine>-<SunGlyph />Highlight brand popularity across the industry</MessageLine>
                </MessageCell>
              </tr>
            </tbody>
          </MessageTable>
        </Cell>
        <Stat name="total_distributors" value="3" size={98} gap={7} />
        <Stat name="total_brands" value="2437" size={42} gap={6} />
        <Stat name="total_skus" value="6042" size={41} gap={5} />

        <Cell $cols={6} $rows={8}>
          <Header>Price Distribution by Distributor</Header>
          <DistributorChart />
        </Cell>
        <Cell $cols={13} $rows={8}>
          <Header>Price Distribution by Brand</Header>
          <BrandChart />
        </Cell>
        <Cell $cols={5} $rows={8}>
          <Header inset={6.75}>Size Comparison</Header>
          <SizePie />
        </Cell>

        <Cell $cols={10} $rows={9}>
          <Header>Country Comparison</Header>
          <MapFrame>
            <WorldMap />
            <ZoomControls>
              <MapButton>+</MapButton>
              <MapButton>−</MapButton>
            </ZoomControls>
            <Legend>
              <LegendItem>Total Wine<LegendDot $c="#2c4f2b" /></LegendItem>
              <LegendItem>wine.com<LegendDot $c="#631f2b" /></LegendItem>
              <LegendItem>Vivino<LegendDot $c="#4a79c2" /></LegendItem>
            </Legend>
            <Attribution>i</Attribution>
          </MapFrame>
        </Cell>
        <Cell $cols={14} $rows={9}>
          <Header inset={6.5}>Top 10 Brands by sku_count</Header>
          <SkuChart />
        </Cell>

        <Cell $cols={12} $rows={7}>
          <Header>Top Product Rating</Header>
          <Table columns={['brand', 'distributor', 'link', 'avg_rating']} rows={RATED} />
        </Cell>
        <Cell $cols={12} $rows={7}>
          <Header inset={7}>Top Product by Price</Header>
          <Table columns={['brand', 'distributor', 'link', 'avg_price']} rows={PRICED} inset={7} />
        </Cell>
      </Grid>
    </Page>
  );
}
